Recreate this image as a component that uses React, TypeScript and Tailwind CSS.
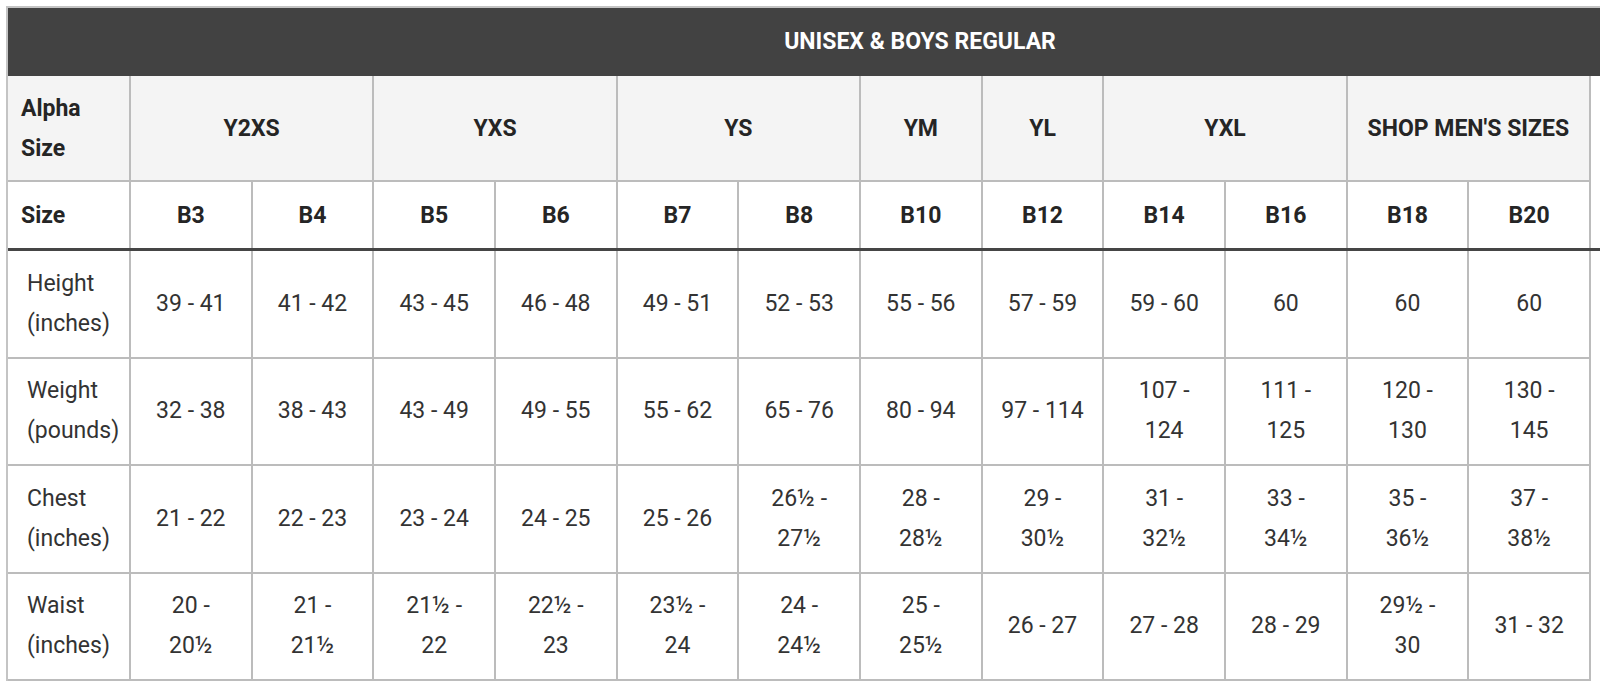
const groups = [
  { label: "Y2XS", span: 2 },
  { label: "YXS", span: 2 },
  { label: "YS", span: 2 },
  { label: "YM", span: 1 },
  { label: "YL", span: 1 },
  { label: "YXL", span: 2 },
  { label: "SHOP MEN'S SIZES", span: 2 },
];

const sizes = ["B3", "B4", "B5", "B6", "B7", "B8", "B10", "B12", "B14", "B16", "B18", "B20"];

const rows = [
  {
    label: "Height\n(inches)",
    values: ["39 - 41", "41 - 42", "43 - 45", "46 - 48", "49 - 51", "52 - 53", "55 - 56", "57 - 59", "59 - 60", "60", "60", "60"],
  },
  {
    label: "Weight\n(pounds)",
    values: ["32 - 38", "38 - 43", "43 - 49", "49 - 55", "55 - 62", "65 - 76", "80 - 94", "97 - 114", "107 -\n124", "111 -\n125", "120 -\n130", "130 -\n145"],
  },
  {
    label: "Chest\n(inches)",
    values: ["21 - 22", "22 - 23", "23 - 24", "24 - 25", "25 - 26", "26½ -\n27½", "28 -\n28½", "29 -\n30½", "31 -\n32½", "33 -\n34½", "35 -\n36½", "37 -\n38½"],
  },
  {
    label: "Waist\n(inches)",
    values: ["20 -\n20½", "21 -\n21½", "21½ -\n22", "22½ -\n23", "23½ -\n24", "24 -\n24½", "25 -\n25½", "26 - 27", "27 - 28", "28 - 29", "29½ -\n30", "31 - 32"],
  },
];

const spanClass: Record<number, string> = {
  1: "col-span-1",
  2: "col-span-2",
};

const grid = "grid w-[1583px] grid-cols-[123px_repeat(12,minmax(0,1fr))]";
const cell = "border-r-2 border-b-2 border-[#bcbcbc] flex items-center";

export default function App() {
  return (
    <div className="h-[692px] w-[1600px] overflow-hidden bg-white pl-[6px] pt-[6px] font-['Roboto',sans-serif]">
      <div className="w-[1826px] border-l-2 border-t-2 border-[#c4c4c4]">
        <div className="flex h-[68px] items-center justify-center bg-[#424242] text-[23px] font-bold text-white">
          UNISEX &amp; BOYS REGULAR
        </div>

        <div className={`${grid} h-[106px] bg-[#f4f4f4] text-[23px] font-bold text-[#252525]`}>
          <div className={`${cell} whitespace-pre-line pl-[13px] pt-[2px] leading-[40px]`}>{"Alpha\nSize"}</div>
          {groups.map((g) => (
            <div key={g.label} className={`${cell} ${spanClass[g.span]} justify-center pt-[2px]`}>
              {g.label}
            </div>
          ))}
        </div>

        <div className={`${grid} h-[66px] text-[23px] font-bold text-[#252525]`}>
          <div className="flex items-center border-r-2 border-[#bcbcbc] pl-[13px] pt-[3px]">Size</div>
          {sizes.map((s) => (
            <div key={s} className="flex items-center justify-center border-r-2 border-[#bcbcbc] pt-[3px]">
              {s}
            </div>
          ))}
        </div>

        <div className="h-[3px] bg-[#454545]" />

        {rows.map((r) => (
          <div key={r.label} className={`${grid} h-[107.5px] text-[23px] leading-[40px] text-[#333]`}>
            <div className={`${cell} whitespace-pre-line pl-[19px]`}>{r.label}</div>
            {r.values.map((v, i) => (
              <div key={i} className={`${cell} justify-center whitespace-pre-line text-center`}>
                {v}
              </div>
            ))}
          </div>
        ))}
      </div>
    </div>
  );
}
